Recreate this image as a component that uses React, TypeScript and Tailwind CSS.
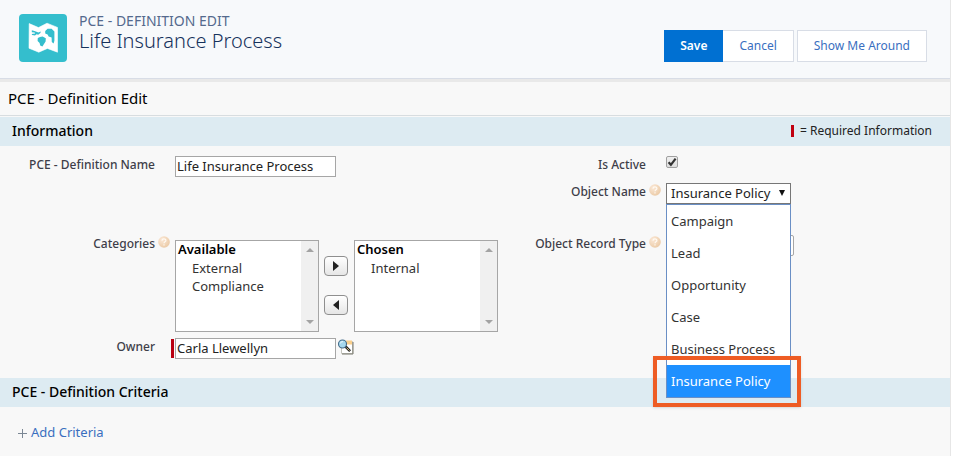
import type { ReactNode } from "react";

const objectNames = ["Campaign", "Lead", "Opportunity", "Case", "Business Process", "Insurance Policy"];

function HelpIcon() {
  return (
    <svg viewBox="0 0 12 12" className="size-3 shrink-0" aria-hidden="true">
      <defs>
        <radialGradient id="help" cx="35%" cy="30%" r="75%">
          <stop offset="0" stopColor="#fbe8d6" />
          <stop offset="1" stopColor="#ebcaa6" />
        </radialGradient>
      </defs>
      <circle cx="6" cy="6" r="5.8" fill="url(#help)" />
      <path d="M4 4.7c0-2.4 3.9-2.3 3.9-.2 0 1.3-1.9 1.3-1.9 2.7M6 8.2v1.4" fill="none" stroke="#fffaf3" strokeWidth="1.2" />
    </svg>
  );
}

function MapIcon() {
  return (
    <svg viewBox="0 0 48 48" className="size-12 shrink-0 rounded bg-[#34becd]" aria-hidden="true">
      <path
        d="M10.2 9.6 19.5 13.6 28 9.2 38.5 13.4V38.2L28.4 34.4 19.8 38.2 10 34.2Z"
        fill="#fff"
        stroke="#fff"
        strokeWidth=".6"
        strokeLinejoin="round"
      />
      <path
        d="M12.8 16.2 15.5 17 19.4 18.6 21.8 17.4 21.4 19 19.2 20.8 17.6 20.2 16 21.6 13 21 12.8 20 16.2 19.6 15.6 18.4 12.8 18.2Z"
        fill="#34becd"
      />
      <path d="M18.8 24 21 23 23.6 22.6 26.8 24.2 26.6 27.6 23.4 32.4 21.2 31.4 20.6 29 18.6 27Z" fill="#34becd" />
      <path
        d="M26.2 17 28.6 14.8 32.6 14.8 35.4 17.4V26.8L34.6 29.4 32.8 28 32.6 23.4 29.6 22.6 28.6 20.4 26.2 19.4Z"
        fill="#34becd"
      />
    </svg>
  );
}

function LookupIcon() {
  return (
    <svg viewBox="0 0 17 16" className="h-4 w-[17px]" aria-hidden="true">
      <path d="M4.5 2.5h11v12h-11z" fill="#fff" stroke="#c4c4bc" />
      <path d="M9 1.5h6v4H9z" fill="#f9cf8c" />
      <path d="M16 3v12H5" fill="none" stroke="#77776c" />
      <path d="m8.5 7.5 4.6 4.6" stroke="#222" strokeWidth="2.6" />
      <path d="m9.5 8.6 3 3" stroke="#d8c483" strokeWidth="1" />
      <circle cx="5.5" cy="5" r="4" fill="#a5d8ee" stroke="#446b88" strokeWidth="1.1" />
      <path d="M3.3 4.4C3.7 3 5 2.5 6.1 2.8" fill="none" stroke="#fff" />
    </svg>
  );
}

function Field({
  label,
  htmlFor,
  labelWidth,
  help,
  children,
}: {
  label: string;
  htmlFor: string;
  labelWidth: string;
  help?: boolean;
  children: ReactNode;
}) {
  return (
    <div className="flex items-start">
      <label htmlFor={htmlFor} className={`${labelWidth} shrink-0 text-right text-xs leading-[18px] font-medium text-[#3e3e49]`}>
        {label}
      </label>
      <span className="flex w-5 shrink-0 pt-px pl-[3px]">{help && <HelpIcon />}</span>
      {children}
    </div>
  );
}

function ListBox({ id, label, heading, items }: { id: string; label: string; heading: string; items: string[] }) {
  return (
    <div className="flex h-[92px] w-36 border border-[#a6a6a6] bg-white">
      <select
        id={id}
        multiple
        aria-label={label}
        className="-mt-px min-w-0 flex-1 overflow-hidden text-[13px] leading-[18px] text-[#333] outline-none [scrollbar-width:none]"
      >
        <optgroup label={heading} className="p-0 leading-4 font-semibold text-black">
          {items.map((item) => (
            <option key={item} className="min-h-0 p-0 pl-4 leading-[18px] font-normal text-[#333]">
              {item}
            </option>
          ))}
        </optgroup>
      </select>
      <div className="flex w-[17px] flex-col items-center justify-between bg-[#f0f0f0] py-[7px]" aria-hidden="true">
        <svg viewBox="0 0 8 4" className="h-1 w-2">
          <path d="M0 4 4 0l4 4z" fill="#a3a3a3" />
        </svg>
        <svg viewBox="0 0 8 4" className="h-1 w-2">
          <path d="M0 0l4 4 4-4z" fill="#a3a3a3" />
        </svg>
      </div>
    </div>
  );
}

function MoveButton({ label, path }: { label: string; path: string }) {
  return (
    <button
      type="button"
      aria-label={label}
      className="flex h-5 w-6 items-center justify-center rounded border border-[#8f8f8f] bg-linear-to-b from-white to-[#e6e6e6]"
    >
      <svg viewBox="0 0 6 10" className="h-[10px] w-[6px]">
        <path d={path} fill="#222" />
      </svg>
    </button>
  );
}

const textBox = "h-[21px] w-[161px] border border-[#a6a6a6] bg-white px-px pb-px text-[13px] leading-[18px] text-[#222] outline-none";
const sectionBar = "flex h-[29px] items-center justify-between bg-[#ddebf2] pr-[18px] pl-3";

export default function App() {
  return (
    <div className="min-h-screen bg-white pr-[2px] font-['Noto_Sans',sans-serif]">
      <div className="min-h-screen border-r border-[#e6e6e6] bg-[#f8f8f8]">
        <header className="flex justify-between border-b border-[#d8dde6] bg-[#f7f9fb] pr-[23px] pl-[19px]">
          <div className="flex gap-3 pt-[14px] pb-4">
            <MapIcon />
            <div>
              <p className="text-sm leading-[14px] text-[#54698d]">PCE - DEFINITION EDIT</p>
              <h1 className="text-xl leading-[26px] font-light text-[#16325c]">Life Insurance Process</h1>
            </div>
          </div>
          <div className="flex items-start pt-[30px] text-xs text-[#3a6fbf]">
            <button type="button" className="h-8 bg-[#0070d2] px-4 font-semibold text-white">
              Save
            </button>
            <button type="button" className="h-8 border border-l-0 border-[#d8dde6] bg-white px-4">
              Cancel
            </button>
            <button type="button" className="ml-[3px] h-8 border border-[#d8dde6] bg-white px-4">
              Show Me Around
            </button>
          </div>
        </header>

        <main className="border-t-[3px] border-[#e9e9e9]">
          <h2 className="border-b border-[#d8dde0] px-2 pt-1 pb-[5px] text-[15px] leading-6 text-black">PCE - Definition Edit</h2>

          <section className="pt-px">
            <div className={sectionBar}>
              <h3 className="pb-px text-sm font-medium text-black">Information</h3>
              <p className="flex items-center gap-[6px] pb-[2px] text-xs text-[#222]">
                <span className="h-3 w-[3px] bg-[#c00010]" />= Required Information
              </p>
            </div>

            <div className="grid grid-cols-2 pt-[10px] pb-[19px]">
              <div>
                <Field label="PCE - Definition Name" htmlFor="name" labelWidth="w-[155px]">
                  <input id="name" defaultValue="Life Insurance Process" className={textBox} />
                </Field>
                <div className="pt-[58px] pb-[6px]">
                  <Field label="Categories" htmlFor="available" labelWidth="w-[155px]" help>
                    <div className="flex pt-[5px]">
                      <ListBox id="available" label="Available" heading="Available" items={["External", "Compliance"]} />
                      <div className="flex flex-col gap-[19px] pt-4 pr-[6px] pl-[5px]">
                        <MoveButton label="Add" path="M0 0l6 5-6 5z" />
                        <MoveButton label="Remove" path="M6 0L0 5l6 5z" />
                      </div>
                      <ListBox id="chosen" label="Chosen" heading="Chosen" items={["Internal"]} />
                    </div>
                  </Field>
                </div>
                <Field label="Owner" htmlFor="owner" labelWidth="w-[155px]">
                  <div className="-ml-1 flex gap-px">
                    <span className="h-[19px] w-[3px] self-center bg-[#b90010]" />
                    <input id="owner" defaultValue="Carla Llewellyn" className={textBox} />
                    <button type="button" aria-label="Owner Lookup" className="self-start pt-px">
                      <LookupIcon />
                    </button>
                  </div>
                </Field>
              </div>

              <div className="flex flex-col">
                <Field label="Is Active" htmlFor="active" labelWidth="w-[171px]">
                  <span className="relative flex size-3">
                    <input
                      id="active"
                      type="checkbox"
                      defaultChecked
                      className="peer size-3 appearance-none rounded-xs border border-[#a0a0a0] bg-linear-to-b from-[#f0f0f0] to-[#dedede]"
                    />
                    <svg viewBox="0 0 12 12" className="pointer-events-none absolute inset-0 hidden size-3 peer-checked:block">
                      <path d="M2.6 6.2 4.9 8.8 9.6 2.6" fill="none" stroke="#333" strokeWidth="2.2" />
                    </svg>
                  </span>
                </Field>
                <div className="pt-[9px] pb-[31px]">
                  <Field label="Object Name" htmlFor="object" labelWidth="w-[171px]" help>
                    <div className="relative w-[125px]">
                      <select
                        id="object"
                        defaultValue="Insurance Policy"
                        className="block h-[21px] w-full appearance-none border border-[#777] bg-white px-1 pb-px text-[13px] leading-[18px] text-[#222] outline-none"
                      >
                        {objectNames.map((name) => (
                          <option key={name}>{name}</option>
                        ))}
                      </select>
                      <svg viewBox="0 0 6 6" className="pointer-events-none absolute top-[7px] right-[6px] size-[6px]">
                        <path d="M0 0h6L3 6z" fill="#111" />
                      </svg>
                      <ul
                        role="listbox"
                        aria-label="Object Name"
                        className="absolute top-full left-0 z-10 w-full border border-[#6a8fc5] bg-white text-[13px] text-[#333]"
                      >
                        {objectNames.map((name) => (
                          <li
                            key={name}
                            role="option"
                            aria-selected={name === "Insurance Policy"}
                            className="flex h-8 items-center px-1 pt-px whitespace-nowrap aria-selected:bg-[#1e90ff] aria-selected:text-white"
                          >
                            {name}
                          </li>
                        ))}
                      </ul>
                      <div className="absolute top-[173px] -left-[13px] z-20 h-[51px] w-[148px] border-4 border-[#ee5c24] shadow-sm" />
                    </div>
                  </Field>
                </div>
                <Field label="Object Record Type" htmlFor="record-type" labelWidth="w-[171px]" help>
                  <select id="record-type" className="h-[21px] w-32 appearance-none rounded-xs border border-[#a6a6a6] bg-white text-[13px]" />
                </Field>
              </div>
            </div>
          </section>

          <section>
            <div className={sectionBar}>
              <h3 className="pb-px text-sm font-medium text-black">PCE - Definition Criteria</h3>
            </div>
            <a href="#add" className="mt-4 ml-[18px] inline-flex items-center gap-1 text-[13px] leading-[18px] text-[#3a6fbf]">
              <svg viewBox="0 0 9 9" className="mt-[3px] size-[9px]" aria-hidden="true">
                <path d="M4.5 0v9M0 4.5h9" stroke="#7b8794" />
              </svg>
              Add Criteria
            </a>
          </section>
        </main>
      </div>
    </div>
  );
}
